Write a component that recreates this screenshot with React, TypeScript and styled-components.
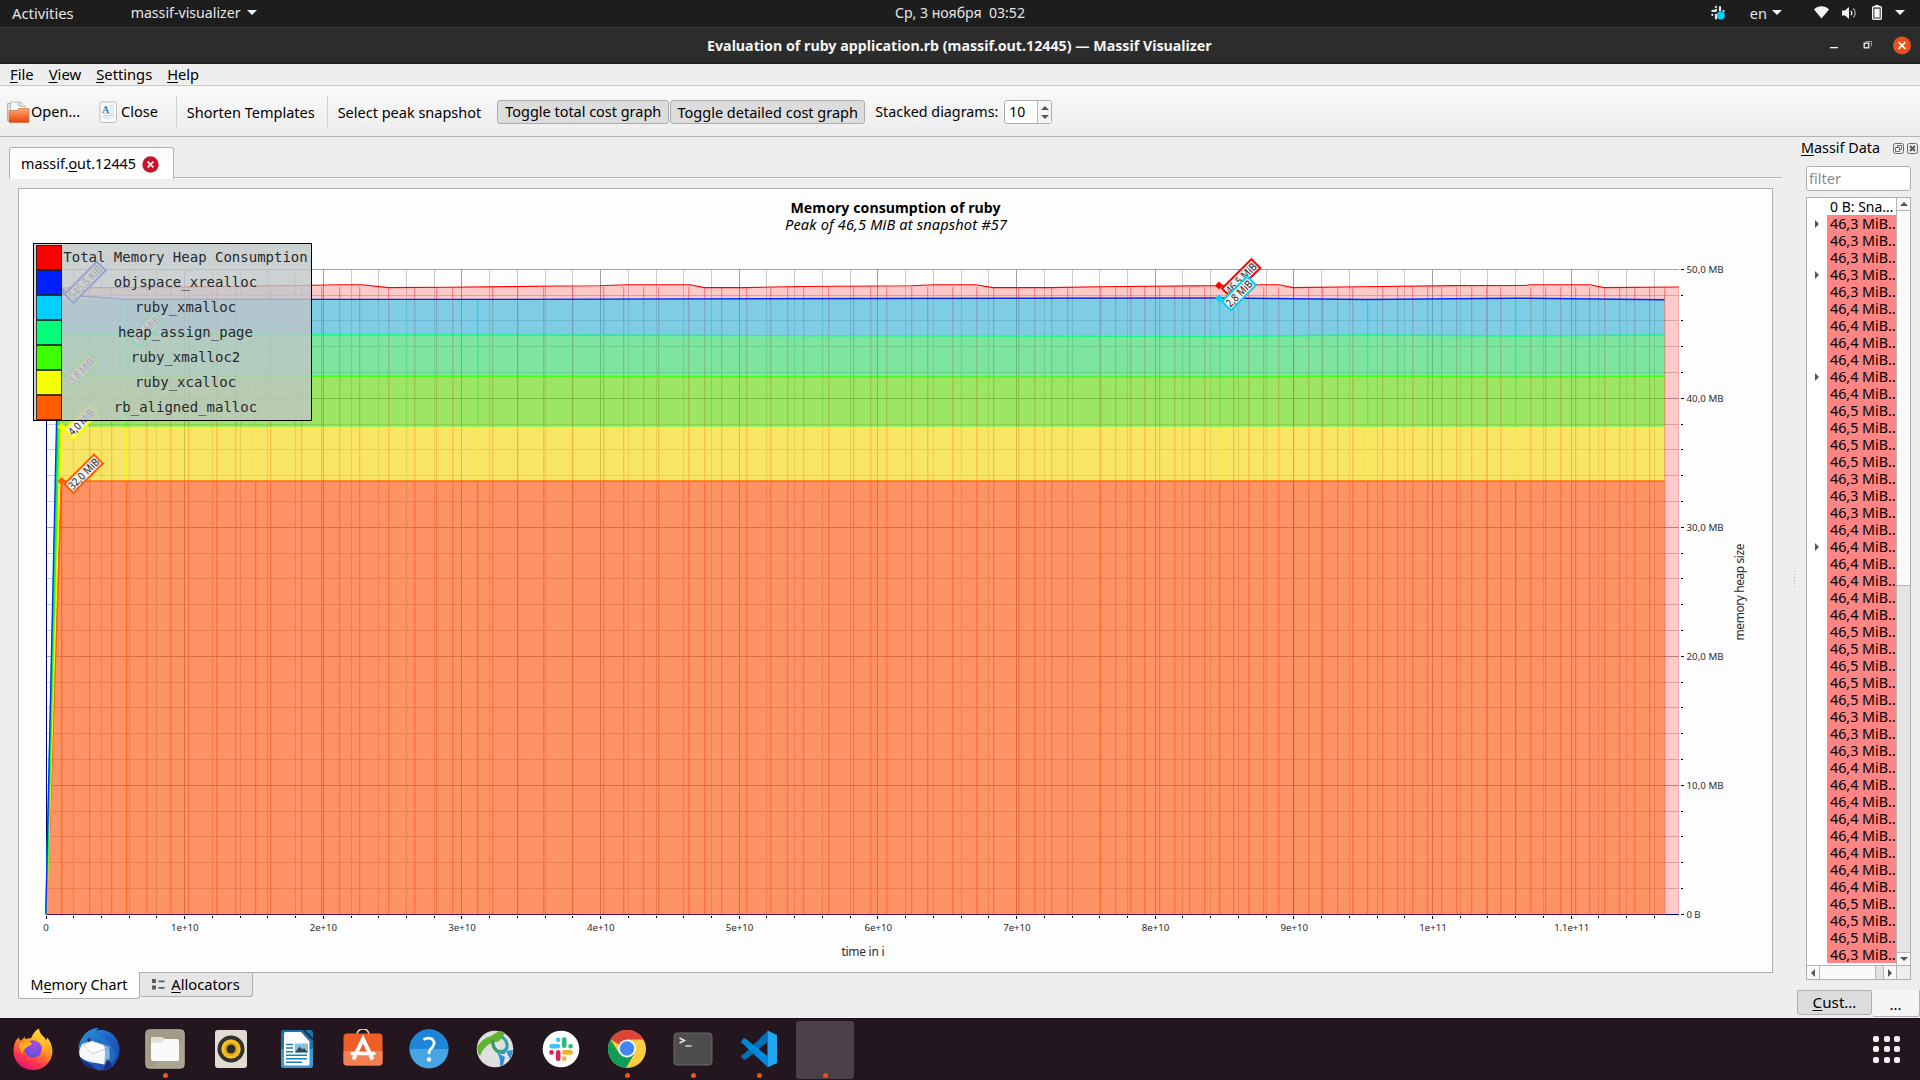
import React from "react";
import styled, { createGlobalStyle, css } from "styled-components";

const SANS = '"Noto Sans", "Open Sans", sans-serif';

const Global = createGlobalStyle`
  *, *::before, *::after { box-sizing: border-box; }
  body { margin: 0; background: #eeeeee; font-family: ${SANS}; color: #000; overflow: hidden; }
  svg { display: block; flex: none; }
`;

const Screen = styled.div`
  width: 1920px;
  height: 1080px;
  display: flex;
  flex-direction: column;
  overflow: hidden;
`;

const Txt = styled.span<{ $size?: number; $bold?: boolean; $ml?: number; $dy?: number }>`
  font-size: ${(p) => p.$size ?? 14.5}px;
  font-weight: ${(p) => (p.$bold ? 700 : 400)};
  line-height: 20px;
  margin-left: ${(p) => p.$ml ?? 0}px;
  margin-top: ${(p) => p.$dy ?? 0}px;
  white-space: pre;
`;

const Key = styled.span`
  text-decoration: underline;
  text-decoration-thickness: 1px;
  text-underline-offset: 2px;
  text-decoration-skip-ink: none;
`;

const Caret = styled.i<{ $ml?: number }>`
  width: 0;
  height: 0;
  margin-left: ${(p) => p.$ml ?? 6}px;
  border-left: 5px solid transparent;
  border-right: 5px solid transparent;
  border-top: 5.5px solid #f2f2f2;
`;

/* ---------- desktop bars ---------- */

const TopBar = styled.header`
  height: 28px;
  flex: none;
  display: grid;
  grid-template-columns: 895px auto 1fr;
  align-items: center;
  padding-bottom: 2px;
  background: #1d1d1d;
  border-bottom: 1px solid #3a3a3a;
  color: #e6e6e6;
`;

const BarGroup = styled.div<{ $end?: boolean }>`
  display: flex;
  align-items: center;
  justify-content: ${(p) => (p.$end ? "flex-end" : "flex-start")};
  padding-left: ${(p) => (p.$end ? 0 : 12)}px;
  padding-right: ${(p) => (p.$end ? 15 : 0)}px;
`;

const Indicator = styled.span<{ $ml: number }>`
  display: flex;
  margin-left: ${(p) => p.$ml}px;
`;

const TitleBar = styled.div`
  height: 36px;
  flex: none;
  display: grid;
  grid-template-columns: 707px 1fr auto;
  align-items: center;
  padding-top: 1px;
  background: #2c2c2c;
  border-bottom: 2px solid #202020;
  color: #f4f4f4;
`;

const Dock = styled.footer`
  height: 62px;
  flex: none;
  display: flex;
  align-items: center;
  background: #23161f;
  border-top: 1px solid #1a1217;
`;

const Launcher = styled.div<{ $active?: boolean; $running?: boolean }>`
  position: relative;
  width: 58px;
  height: 58px;
  margin: 0 4px;
  padding-bottom: 2px;
  flex: none;
  display: flex;
  align-items: center;
  justify-content: center;
  border-radius: 3px;
  background: ${(p) => (p.$active ? "#4b4048" : "transparent")};
  ${(p) =>
    p.$running &&
    css`
      &::after {
        content: "";
        position: absolute;
        left: 26.5px;
        bottom: 1px;
        width: 5px;
        height: 5px;
        border-radius: 50%;
        background: #e95420;
      }
    `}
`;

const AppGrid = styled.div`
  margin-left: auto;
  margin-right: 20px;
  margin-bottom: 1px;
  display: grid;
  grid-template-columns: repeat(3, 6px);
  gap: 4.5px;
`;

const GridDot = styled.i`
  width: 6px;
  height: 6px;
  border-radius: 2px;
  background: #f3f1f2;
`;

/* ---------- window chrome ---------- */

const MenuBar = styled.nav`
  height: 22px;
  flex: none;
  display: flex;
  align-items: center;
  padding-bottom: 2px;
  background: #eeeeee;
  border-bottom: 1px solid #cacaca;
`;

const ToolBar = styled.div`
  height: 51px;
  flex: none;
  display: flex;
  align-items: center;
  padding: 2px 0 0 7px;
  background: linear-gradient(#f9f9f9, #ededed);
  border-bottom: 1px solid #b3b3b3;
`;

const Separator = styled.i<{ $ml: number }>`
  width: 1px;
  height: 32px;
  margin-left: ${(p) => p.$ml}px;
  background: #d0d0d0;
`;

const ToggleButton = styled.button<{ $w: number; $ml: number }>`
  width: ${(p) => p.$w}px;
  height: 24px;
  margin-left: ${(p) => p.$ml}px;
  padding: 0;
  display: flex;
  align-items: center;
  justify-content: center;
  border: 1px solid #adadad;
  border-radius: 3px;
  background: #dcdcdc;
  color: #000;
  font-family: inherit;
`;

const Spin = styled.div`
  width: 48px;
  height: 24px;
  margin-left: 6px;
  display: flex;
  align-items: center;
  border: 1px solid #adadad;
  border-radius: 3px;
  background: #fff;
`;

const SpinButtons = styled.div`
  width: 14px;
  height: 22px;
  margin-left: auto;
  display: flex;
  flex-direction: column;
  align-items: center;
  justify-content: center;
  gap: 5px;
  border-left: 1px solid #b8b8b8;
  background: #f5f5f5;
`;

const Arrow = styled.i<{ $dir: "up" | "down" | "left" | "right" }>`
  width: 0;
  height: 0;
  border: 4px solid transparent;
  ${(p) => p.$dir === "up" && css`border-top: 0; border-bottom-color: #555;`}
  ${(p) => p.$dir === "down" && css`border-bottom: 0; border-top-color: #555;`}
  ${(p) => p.$dir === "left" && css`border-left: 0; border-right-color: #555;`}
  ${(p) => p.$dir === "right" && css`border-right: 0; border-left-color: #555;`}
`;

const Main = styled.main`
  flex: 1;
  min-height: 0;
  display: flex;
  background: #eeeeee;
`;

const Document = styled.section`
  width: 1782px;
  flex: none;
  display: flex;
  flex-direction: column;
  padding-top: 10px;
`;

const FileTabs = styled.div`
  height: 32px;
  flex: none;
  display: flex;
  &::before, &::after {
    content: "";
    height: 32px;
    border-bottom: 1px solid #fff;
    box-shadow: inset 0 -1px 0 #b3b3b3;
  }
  &::before { width: 9px; box-shadow: none; border-color: transparent; }
  &::after { flex: 1; }
`;

const FileTab = styled.div`
  width: 165px;
  height: 32px;
  display: flex;
  align-items: center;
  padding: 1px 0 0 11px;
  border: 1px solid #b3b3b3;
  border-bottom: 0;
  border-radius: 3px 3px 0 0;
  background: linear-gradient(#f9f9f9, #fff 60%);
`;

const TabClose = styled.span`
  margin-left: 6px;
`;

const ChartFrame = styled.div`
  position: relative;
  width: 1755px;
  height: 785px;
  flex: none;
  margin: 9px 0 0 18px;
  border: 1px solid #aeaeae;
  background: #fdfdfd;
`;

const Legend = styled.ul`
  position: absolute;
  left: 14px;
  top: 54px;
  width: 279px;
  height: 178px;
  margin: 0;
  padding: 1px 1px 1px 2px;
  list-style: none;
  border: 1px solid #000;
  background: rgba(191, 197, 199, 0.8);
`;

const LegendRow = styled.li`
  height: 25px;
  display: flex;
  align-items: center;
  font-family: "DejaVu Sans Mono", monospace;
  font-size: 14px;
  color: #26292c;
`;

const Swatch = styled.i<{ $color: string }>`
  width: 26px;
  height: 25px;
  flex: none;
  border: 1.5px solid rgba(35, 30, 30, 0.85);
  background: ${(p) => p.$color};
`;

const LegendName = styled.span`
  flex: 1;
  text-align: center;
  padding: 0 1px 1px 0;
  white-space: nowrap;
`;

const ViewTabs = styled.div`
  display: flex;
  align-items: flex-start;
  padding-left: 18px;
`;

const ViewTab = styled.div<{ $w: number; $current?: boolean }>`
  width: ${(p) => p.$w}px;
  height: ${(p) => (p.$current ? 27 : 24)}px;
  margin-top: ${(p) => (p.$current ? -1 : 0)}px;
  display: flex;
  align-items: center;
  justify-content: center;
  gap: 6px;
  position: relative;
  padding-bottom: ${(p) => (p.$current ? 0 : 1)}px;
  border: 1px solid #aeaeae;
  border-top: 0;
  border-left-width: ${(p) => (p.$current ? 1 : 0)}px;
  border-radius: 0 0 3px 3px;
  background: ${(p) => (p.$current ? "#fdfdfd" : "#e6e6e6")};
`;

/* ---------- data panel ---------- */

const Splitter = styled.div`
  width: 15px;
  flex: none;
  display: flex;
  flex-direction: column;
  justify-content: center;
  padding-left: 12px;
`;

const SplitGrip = styled.i`
  height: 17px;
  width: 1px;
  margin-top: 3px;
  background: repeating-linear-gradient(#a8a8a8 0 1px, transparent 1px 3px);
`;

const DataPanel = styled.aside`
  width: 123px;
  flex: none;
  display: flex;
  flex-direction: column;
`;

const PanelTitle = styled.div`
  height: 22px;
  display: flex;
  align-items: center;
  padding-left: 4px;
  svg { margin-left: 3px; }
`;

const Filter = styled.input`
  width: 105px;
  height: 25px;
  margin: 7px 0 0 9px;
  padding: 0 2px 2px;
  border: 1px solid #b0b0b0;
  border-radius: 3px;
  background: #fff;
  font-family: inherit;
  font-size: 14.5px;
  &::placeholder { color: #8a8a8a; opacity: 1; }
`;

const Tree = styled.div`
  width: 105px;
  height: 783px;
  margin: 6px 0 0 9px;
  display: grid;
  grid-template-columns: 1fr 14px;
  grid-template-rows: 1fr 14px;
  border: 1px solid #b0b0b0;
  background: #fff;
`;

const TreeRows = styled.div`
  overflow: hidden;
  min-height: 0;
`;

const TreeRow = styled.div`
  height: 17px;
  display: grid;
  grid-template-columns: 20px 1fr;
  align-items: center;
`;

const Expander = styled.span`
  display: flex;
  justify-content: center;
`;

const Cell = styled.span<{ $peak?: boolean }>`
  height: 17px;
  padding-left: 3px;
  white-space: nowrap;
  font-size: ${(p) => (p.$peak ? 14.3 : 14)}px;
  line-height: 17px;
  background: ${(p) => (p.$peak ? "#ff8585" : "#fff")};
`;

const VScroll = styled.div`
  display: flex;
  flex-direction: column;
  border-left: 1px solid #b4b4b4;
  background: #e4e4e4;
`;

const HScroll = styled.div`
  display: flex;
  border-top: 1px solid #b4b4b4;
  background: #e4e4e4;
`;

const ScrollButton = styled.span<{ $edge: "top" | "bottom" | "left" | "right" }>`
  width: 13px;
  height: 13px;
  flex: none;
  display: flex;
  align-items: center;
  justify-content: center;
  background: #f8f8f8;
  border-${(p) => p.$edge}: 1px solid #b4b4b4;
`;

const Thumb = styled.i<{ $len: number; $horizontal?: boolean }>`
  flex: none;
  background: #fafafa;
  ${(p) =>
    p.$horizontal
      ? css`width: ${p.$len}px; border-right: 1px solid #b4b4b4;`
      : css`height: ${p.$len}px; border-bottom: 1px solid #b4b4b4;`}
`;

const Gap = styled.i`
  flex: 1;
`;

const Corner = styled.i`
  border-top: 1px solid #b4b4b4;
  border-left: 1px solid #b4b4b4;
  background: #eeeeee;
`;

const PanelTabs = styled.div`
  display: flex;
  align-items: flex-start;
  margin-top: 10px;
`;

const PanelTab = styled.div<{ $w: number; $current?: boolean }>`
  width: ${(p) => p.$w}px;
  height: ${(p) => (p.$current ? 27 : 25)}px;
  display: flex;
  align-items: center;
  justify-content: center;
  padding-bottom: 1px;
  border: 1px solid #b0b0b0;
  border-top-color: ${(p) => (p.$current ? "#f5f5f5" : "#b0b0b0")};
  border-left-width: ${(p) => (p.$current ? 0 : 1)}px;
  border-radius: 0 0 3px 3px;
  background: ${(p) => (p.$current ? "#f5f5f5" : "#dcdcdc")};
`;

/* ---------- chart ---------- */

const X0 = 46;
const Y0 = 914;
const XD = 1664.5;
const XR = 1679;

const DETAILED = [61, 126, 255, 477, 1219, 1367, 1515];
const SNAPSHOTS = [
  89, 111, 146, 170, 188, 216, 235, 270, 301, 321, 339, 359, 388, 414, 436, 452, 492, 517, 543, 572, 603, 623, 643, 658,
  688, 704, 721, 746, 770, 787, 803, 828, 853, 870, 886, 911, 927, 952, 976, 993, 1018, 1034, 1051, 1067, 1100, 1115,
  1130, 1144, 1159, 1174, 1189, 1204, 1233, 1248, 1263, 1278, 1293, 1308, 1322, 1337, 1352, 1382, 1397, 1412, 1427,
  1441, 1456, 1471, 1486, 1500, 1530, 1545, 1560, 1575, 1589, 1604, 1619, 1634, 1649, 1664,
];

const TOTAL =
  "46,914 61.6,288 180,287 300,285.5 340,284.7 362,284.7 388,287.6 450,287.3 560,286 600,285.8 625,284.7 690,284.7 704,287.6 745,287.6 800,286.5 911,285.8 935,284.7 976,284.7 993,287.6 1050,287.6 1100,286.8 1219,285.6 1235,284.7 1279,284.7 1293,287.6 1360,286.8 1456,285.6 1525,285.5 1530,284.7 1590,284.7 1604,287.6 1679,287";

type Point = [number, number];
const LEVELS: { color: string; top: Point[] }[] = [
  { color: "#00cfff", top: [[61, 299.5], [1664.5, 299.5]] },
  { color: "#00ff78", top: [[61, 334.5], [477, 335], [700, 335.5], [1219, 336.5], [1367, 335], [1515, 336], [1664.5, 335]] },
  { color: "#3cff00", top: [[61, 376.2], [477, 376.5], [1219, 377], [1367, 376.3], [1515, 377], [1664.5, 376.4]] },
  { color: "#f4ff00", top: [[61, 427.6], [1664.5, 427.6]] },
  { color: "#ff5c00", top: [[61, 481], [1664.5, 481]] },
];
const BLUE: Point[] = [[60.5, 294.5], [126, 299.4], [477, 299.4], [880, 298.5], [1219, 298], [1367, 299.5], [1515, 298.2], [1664.5, 299.8]];

const toPath = (pts: Point[]) => pts.map((p) => p.join(",")).join(" ");

const band = (i: number) => {
  const upper = LEVELS[i].top;
  const lower = i + 1 < LEVELS.length ? LEVELS[i + 1].top : ([[61, Y0], [XD, Y0]] as Point[]);
  return toPath([[X0, Y0], ...upper, ...[...lower].reverse()]);
};

function Grid() {
  const minor: React.ReactNode[] = [];
  const major: React.ReactNode[] = [];
  for (let k = 0; k <= 58; k++) {
    const x = Math.floor(X0 + 27.73 * k);
    if (k % 5 === 0) major.push(<rect key={"x" + k} x={x} y={269} width={1} height={645} />);
    else minor.push(<rect key={"x" + k} x={x} y={269} width={1} height={645} />);
  }
  for (let j = 1; j <= 25; j++) {
    const y = Math.floor(Y0 + 0.3 - 25.8 * j);
    if (j % 5 === 0) major.push(<rect key={"y" + j} x={X0} y={y} width={XR - X0} height={1} />);
    else minor.push(<rect key={"y" + j} x={X0} y={y} width={XR - X0} height={1} />);
  }
  return (
    <g>
      <g fill="#cbcbcb">{minor}</g>
      <g fill="#a0a0a0">{major}</g>
    </g>
  );
}

const Y_LABELS = ["0 B", "10,0 MB", "20,0 MB", "30,0 MB", "40,0 MB", "50,0 MB"];
const X_LABELS = ["0", "1e+10", "2e+10", "3e+10", "4e+10", "5e+10", "6e+10", "7e+10", "8e+10", "9e+10", "1e+11", "1.1e+11"];

function Axes() {
  return (
    <g fontFamily={SANS} fontSize={9.7} fill="#2c2c30">
      <rect x={X0} y={269} width={1} height={646} fill="#000080" />
      <rect x={X0} y={Y0} width={XD - X0} height={1} fill="#5a0f50" />
      <rect x={XD} y={Y0} width={XR - XD} height={1} fill="#000080" />
      {Array.from({ length: 59 }, (_, k) => (
        <rect key={"tx" + k} x={Math.floor(X0 + 27.73 * k)} y={916} width={1} height={k % 5 ? 2 : 3} fill="#000" />
      ))}
      {Array.from({ length: 26 }, (_, j) => (
        <rect key={"ty" + j} x={1681} y={Math.floor(Y0 + 0.3 - 25.8 * j)} width={j % 5 ? 2 : 3} height={1} fill="#000" />
      ))}
      {Y_LABELS.map((t, i) => (
        <text key={t} x={1686.5} y={918 - 129 * i} textLength={i ? 37 : 14}>{t}</text>
      ))}
      {X_LABELS.map((t, i) => (
        <text key={t} x={46 + 138.7 * i} y={931} textAnchor="middle" textLength={t.length > 5 ? 35 : t.length > 1 ? 27.5 : 5.5}>
          {t}
        </text>
      ))}
      <text x={863} y={956} fontSize={12} textAnchor="middle" textLength={43}>time in i</text>
      <text transform="translate(1744 592) rotate(-90)" fontSize={12} textAnchor="middle" textLength={97}>memory heap size</text>
    </g>
  );
}

interface MarkProps {
  x: number;
  y: number;
  w: number;
  color: string;
  label: string;
}

function Mark({ x, y, w, color, label }: MarkProps) {
  return (
    <g>
      <path d={`M${x - 4} ${y}l4-4 4 4-4 4z`} fill={color} />
      <g transform={`translate(${x + 3} ${y + 3}) rotate(-45)`}>
        <rect width={w - 2} height={12.5} fill="#f3f0ef" stroke={color} strokeWidth={2} />
        <text x={(w - 2) / 2} y={10.2} fontFamily={SANS} fontSize={10.8} fill="#222" textAnchor="middle" textLength={w - 5} lengthAdjust="spacingAndGlyphs">
          {label}
        </text>
      </g>
    </g>
  );
}

function Chart() {
  return (
    <svg width={1753} height={783} viewBox="19 189 1753 783">
      <g fontFamily={SANS} textAnchor="middle" fill="#000">
        <text x={895.5} y={213} fontSize={14.1} fontWeight={700} textLength={210}>Memory consumption of ruby</text>
        <text x={896} y={230} fontSize={14.6} fontStyle="italic" textLength={222}>Peak of 46,5 MiB at snapshot #57</text>
      </g>
      <Grid />
      <polygon points={`${TOTAL} ${XR},${Y0}`} fill="#ff0000" fillOpacity={0.2} />
      <g fill="#ff0000" fillOpacity={0.34}>
        {SNAPSHOTS.map((x) => <rect key={x} x={x} y={287} width={1.3} height={627} />)}
        <rect x={1678} y={287} width={1} height={627} fillOpacity={0.15} />
      </g>
      <polyline points={TOTAL} fill="none" stroke="#ff0000" strokeWidth={1.1} />
      {LEVELS.map((l, i) => <polygon key={l.color} points={band(i)} fill={l.color} fillOpacity={0.5} />)}
      {LEVELS.map((l, i) => {
        const y = l.top[0][1];
        const end = i + 1 < LEVELS.length ? LEVELS[i + 1].top[0][1] : Y0;
        return (
          <g key={l.color} fill={l.color} fillOpacity={0.7}>
            {DETAILED.map((x) => <rect key={x} x={x} y={y} width={1.3} height={end - y} />)}
          </g>
        );
      })}
      {LEVELS.slice(1).map((l) => (
        <polyline key={l.color} points={toPath(l.top)} fill="none" stroke={l.color} strokeOpacity={0.85} strokeWidth={1.4} />
      ))}
      <polyline points="61,481.4 1664.5,481.4" fill="none" stroke="#f08000" strokeWidth={1} />
      <polyline points={toPath(BLUE)} fill="none" stroke="#0028ff" strokeWidth={1.4} />
      <Axes />
      <g fill="none" strokeWidth={1.8}>
        <path d="M46.5 914 61.5 481" stroke="#ff5c00" />
        <path d="M46.5 914 61 427" stroke="#f4ff00" />
        <path d="M46.3 914 60.2 376" stroke="#3cff00" />
        <path d="M46 914 59.3 335" stroke="#00d890" />
        <path d="M45.8 914 59.2 299" stroke="#0030ff" strokeWidth={1.3} />
      </g>
      <Mark x={61.7} y={291} w={47.6} color="#0020e0" label="545,5 KiB" />
      <Mark x={127} y={334} w={36.5} color="#00ff78" label="3,1 MiB" />
      <Mark x={61.5} y={375.5} w={36.5} color="#3cff00" label="3,8 MiB" />
      <Mark x={61.5} y={426.8} w={36.5} color="#f4ff00" label="4,0 MiB" />
      <Mark x={61.5} y={481} w={43.6} color="#ff5c00" label="32,0 MiB" />
      <Mark x={1219} y={285.6} w={43.6} color="#ff0000" label="46,5 MiB" />
      <Mark x={1219} y={298.6} w={37.5} color="#00cfff" label="2,8 MiB" />
    </svg>
  );
}

const LEGEND: [string, string][] = [
  ["#ff0000", "Total Memory Heap Consumption"],
  ["#0020ff", "objspace_xrealloc"],
  ["#00cfff", "ruby_xmalloc"],
  ["#00ff78", "heap_assign_page"],
  ["#3cff00", "ruby_xmalloc2"],
  ["#f4ff00", "ruby_xcalloc"],
  ["#ff5c00", "rb_aligned_malloc"],
];

const SIZES = "33333" + "444444" + "5555" + "333" + "444444" + "55555" + "333" + "44444444" + "555" + "3";
const EXPANDABLE = [0, 3, 9, 19];

/* ---------- icons ---------- */

const SlackTray = () => (
  <svg width="16" height="16" viewBox="0 0 16 16">
    <g stroke="#e8e8e8" strokeWidth="2.2" strokeLinecap="round">
      <path d="M6 4.8v1M6 1.900v.1M10 2.200v3.200M2.400 5.900h3M13.600 6h-.1M2.300 9.800h.1M6 9.800v3.600" />
    </g>
    <circle cx="10.800" cy="10.500" r="4" fill="#00d0f5" />
  </svg>
);

const Wifi = () => (
  <svg width="15" height="13" viewBox="0 0 15 13">
    <path d="M7.5 12.5 0 3.6C4-.8 11-.8 15 3.6z" fill="#f2f2f2" />
  </svg>
);

const Volume = () => (
  <svg width="15" height="14" viewBox="0 0 15 14">
    <path d="M0 4.5h3L7 1v12L3 9.5H0z" fill="#f2f2f2" />
    <path d="M9 4.8q1.6 2.2 0 4.4" fill="none" stroke="#f2f2f2" strokeWidth="1.3" />
    <path d="M11.4 2.4q3.6 4.6 0 9.2" fill="none" stroke="#b0b0b0" strokeWidth="1.2" />
  </svg>
);

const Battery = () => (
  <svg width="10" height="15" viewBox="0 0 10 15">
    <path d="M3 0h4v2H3z" fill="#f2f2f2" />
    <rect x=".7" y="1.7" width="8.6" height="12.6" rx="1" fill="none" stroke="#f2f2f2" strokeWidth="1.4" />
    <path d="M2.3 3.6h5.4v9H2.3z" fill="#f2f2f2" />
  </svg>
);

const WindowButtons = () => (
  <svg width="98" height="34" viewBox="0 0 98 34">
    <path d="M8 18h8v1.300H8z" fill="#f2f2f2" />
    <path d="M43.500 12.500h6v5" fill="none" stroke="#999" />
    <rect x="42.200" y="14.200" width="4.600" height="4.600" fill="none" stroke="#f2f2f2" strokeWidth="1.300" />
    <circle cx="80" cy="16.500" r="9" fill="#e8501c" />
    <path d="m76.600 13.100 6.800 6.800m0-6.800-6.800 6.800" stroke="#fff" strokeWidth="1.500" />
  </svg>
);

const OpenIcon = () => (
  <svg width="23" height="22" viewBox="0 0 23 22">
    <defs>
      <linearGradient id="fold" x2="0" y2="1">
        <stop offset="0" stopColor="#f6b07c" />
        <stop offset=".5" stopColor="#f0763a" />
        <stop offset="1" stopColor="#e8430f" />
      </linearGradient>
    </defs>
    <path d="M.5 20V2.5h4V20z" fill="#e2e0dd" stroke="#b5b2ae" />
    <path d="M3.5 1h10l4.5 4.5V14H3.5z" fill="#f8f8f7" stroke="#b9b9b9" />
    <path d="M11 1v3.5h3M13.5 1v4.5H18" fill="none" stroke="#b9b9b9" />
    <path d="M2 20.5V9.5h8l1.5-2H22v13q0 1-1 1H3q-1 0-1-1z" fill="url(#fold)" stroke="#d9622c" strokeWidth=".6" />
  </svg>
);

const DocIcon = () => (
  <svg width="19" height="23" viewBox="0 0 19 23">
    <rect x="1" y="1" width="16.5" height="20.5" rx="2" fill="#fafafa" stroke="#bdbdbd" />
    <text x="3" y="11.5" fontFamily="Liberation Serif, serif" fontWeight="700" fontSize="10" fill="#3a76b0">A</text>
    <path d="M11 4.5h4M11 7h4M11 9.5h4M4 12.5h11M4 14.7h11M4 17h8" stroke="#b5d8f2" strokeWidth="1.2" />
  </svg>
);

const RedClose = () => (
  <svg width="17" height="17" viewBox="0 0 17 17">
    <circle cx="8.5" cy="8.5" r="8.2" fill="#c8152c" />
    <path d="m5.7 5.7 5.6 5.6m0-5.6-5.6 5.6" stroke="#fff" strokeWidth="1.8" />
  </svg>
);

const ListIcon = () => (
  <svg width="13" height="11" viewBox="0 0 13 11">
    <path d="M0 0h4v4H0zM0 6.500h4v4H0zM6.500 1.500h6v1.700h-6zM6.500 8h6v1.700h-6z" fill="#555c63" />
  </svg>
);

const FloatIcon = () => (
  <svg width="11" height="11" viewBox="0 0 11 11" fill="none" stroke="#6b6b6b">
    <rect x=".5" y=".5" width="10" height="10" rx="2" />
    <path d="M4.500 4.500v-2h4v4h-2M2.500 4.500h4v4h-4z" />
  </svg>
);

const CloseIcon = () => (
  <svg width="11" height="11" viewBox="0 0 11 11" fill="none" stroke="#6b6b6b">
    <rect x=".5" y=".5" width="10" height="10" rx="2" />
    <path d="m3 3 5 5m0-5-5 5" strokeWidth="2" stroke="#5a5a5a" />
  </svg>
);

const Firefox = () => (
  <svg width="42" height="42" viewBox="0 0 42 42">
    <defs>
      <linearGradient id="ff" x1=".8" y1="0" x2=".3" y2="1">
        <stop offset="0" stopColor="#fff04a" />
        <stop offset=".4" stopColor="#ffa01e" />
        <stop offset=".75" stopColor="#ff3a4a" />
        <stop offset="1" stopColor="#e60f78" />
      </linearGradient>
      <radialGradient id="fc" cx=".6" cy=".2" r=".9">
        <stop offset="0" stopColor="#a84ae8" />
        <stop offset="1" stopColor="#5c50d8" />
      </radialGradient>
    </defs>
    <path d="M6.500 9.500 8.500 13q1-1.500 2.500-2l1.500-2.500.6 2.500 6-1C21 6 23 2.500 27 .500q.5 5 5 8.500 1.500 1.500 2.200 3.500l1-3q5 5.500 5.300 14A19.500 18.800 0 1 1 1.800 20q0-6 4.700-10.500z" fill="url(#ff)" />
    <circle cx="21" cy="21" r="8.700" fill="url(#fc)" />
    <path d="M7 16q5-1 8-3 3 0 5 2.500-.5 2-3.500 2.500l-2.500 2q-4 2-3 6-4-4-4-10z" fill="#ffae22" />
    <path d="M18 11.500q7-2 12 4 3 5 0 11 5-8 1-15-3-4-5-8-4 4-3 7-3-.5-5 1z" fill="#ffc92e" opacity=".8" />
  </svg>
);

const Thunderbird = () => (
  <svg width="44" height="44" viewBox="0 0 44 44">
    <defs>
      <linearGradient id="tb" x2="1" y2="1">
        <stop offset="0" stopColor="#2f9bd8" />
        <stop offset=".5" stopColor="#1f62c4" />
        <stop offset="1" stopColor="#19409c" />
      </linearGradient>
    </defs>
    <path d="M10 5Q16 .5 22 1l-3 2.500q10-2 17 4 7 7 6.500 17-1 9-7 15l-6 3.500-8 .5L8 37q-7-7-6.500-17Q3 11 10 5z" fill="url(#tb)" />
    <path d="M5 17q-4 7-2 13 6 5 16 6l11 2q4-6 2-18L14 14z" fill="#f6f7f9" />
    <path d="m6.500 18 9 9 17-7-18-6z" fill="#fff" stroke="#c2c9d4" strokeWidth=".9" />
    <path d="M13 3Q5 9 5 18q2-7 10-8 8 0 11 6 4 8 0 26 12-5 13-15Q32 12 13 3z" fill="#2a7fd0" opacity=".55" />
    <path d="M2 29q3 10 12 13l3-3-10-5zM30 32l-4 11q7-2 9-6z" fill="#1b2d7c" />
    <circle cx="12" cy="13" r="1.800" fill="#15306e" />
  </svg>
);

const Files = () => (
  <svg width="40" height="40" viewBox="0 0 40 40">
    <rect x=".8" y=".8" width="38.400" height="38.400" rx="3.500" fill="#a39b87" stroke="#b9b2a0" />
    <path d="m6 39 33-28v26q0 2-2 2z" fill="#aca591" />
    <path d="M6 30V10q0-2 2-2h9l2.500 2H32q2 0 2 2v18q0 2-2 2H8q-2 0-2-2z" fill="#fafafa" />
    <path d="M6 14v-4q0-2 2-2h9l2.500 2-2 3z" fill="#e3dfd7" />
  </svg>
);

const Rhythmbox = () => (
  <svg width="34" height="40" viewBox="0 0 34 40">
    <rect x="1" y="1" width="32" height="38" rx="3" fill="#e2ddd3" />
    <circle cx="17" cy="20" r="13.500" fill="#303030" />
    <circle cx="17" cy="20" r="9.800" fill="#e2a80e" />
    <circle cx="17" cy="20" r="8" fill="none" stroke="#f7c72e" strokeWidth="2" />
    <circle cx="17" cy="20" r="4.500" fill="#2b2b2b" />
  </svg>
);

const Writer = () => (
  <svg width="34" height="40" viewBox="0 0 34 40">
    <rect x="1" y="1" width="32" height="38" rx="3" fill="#1577ad" />
    <path d="M1 20h32v16q0 3-3 3H4q-3 0-3-3z" fill="#3d9ad0" />
    <path d="M4 4.500Q4 3 5.500 3H21l8.500 9.500V35q0 1.500-1.500 1.500H5.500Q4 36.500 4 35z" fill="#fff" />
    <path d="M22 1h3l8 8v3z" fill="#22161f" opacity=".7" />
    <path d="M6 15.500h7M6 19h7M6 22.700h7M6 26.300h21M6 29.800h21M6 33.300h16" stroke="#1a7fb8" strokeWidth="1.500" />
    <path d="M15 14.500h13v9H15z" fill="#7cc4ee" />
    <path d="m15 23.500 4.500-6 3 3 1.500-1.500 4 4.500z" fill="#3a4750" />
    <circle cx="25.500" cy="16.500" r="1.300" fill="#f0b820" />
  </svg>
);

const Software = () => (
  <svg width="40" height="40" viewBox="0 0 40 40">
    <path d="M14 8V5.500a6 5.500 0 0 1 12 0V8" fill="none" stroke="#f0cfae" strokeWidth="1.600" />
    <rect x=".5" y="4.500" width="39" height="32" rx="3.500" fill="#f05e28" />
    <path d="M.500 22h39v11q0 3.500-3.500 3.500H4Q.5 36.500.5 33z" fill="#f48052" />
    <path d="M13.500 23.500 20 10 26.500 23.500" fill="none" stroke="#fff" strokeWidth="4" />
    <path d="M9 24.500h22" stroke="#fff" strokeWidth="3.400" strokeLinecap="round" />
    <path d="m12.500 26-2 4.500M27.500 26l2 4.500" stroke="#fff" strokeWidth="4" />
  </svg>
);

const Help = () => (
  <svg width="40" height="40" viewBox="0 0 40 40">
    <circle cx="20" cy="20" r="19.500" fill="#48a5e4" />
    <path d="M.500 20a19.500 19.500 0 0 1 39 0z" fill="#1e86d8" />
    <path d="M14.500 10.500q5-2.500 8.500-.5 4 3.500.5 8-3.500 3-3.500 7" fill="none" stroke="#fff" strokeWidth="2.600" />
    <circle cx="20" cy="30.500" r="2.200" fill="#fff" />
  </svg>
);

const Cookie = () => (
  <svg width="38" height="38" viewBox="0 0 38 38">
    <circle cx="19" cy="19" r="18.300" fill="#dedfde" />
    <path d="M1.500 16.500Q6 8.500 15 6l8-5q4 0 5.500 1.500-1 5-6 9-7 .5-12 4.500-4.500 4-6.500 10-3.500-4-2.500-9.500z" fill="#62b32e" />
    <path d="M17 10q-1 6 3 10 4 3.500 9 2" fill="none" stroke="#3a9a5a" strokeWidth="3.200" />
    <path d="M26 7q6 4 5 10.500-2 5.500-8 3.500" fill="none" stroke="#2f9fae" strokeWidth="3.200" />
    <path d="M20 22q5 4 4 14l3-1 2-8zM30 21l7-1q-1 6-3 9z" fill="#2a8fd6" />
  </svg>
);

const Slack = () => (
  <svg width="38" height="38" viewBox="0 0 38 38">
    <circle cx="19" cy="19" r="18.300" fill="#fff" />
    <g strokeWidth="4.600" strokeLinecap="round">
      <path d="M9.500 16.200h6.300M16.200 9.700v.1" stroke="#36c5f0" />
      <path d="M22.300 9.500v6.300M28.500 16.200h.1" stroke="#2eb67d" />
      <path d="M22.300 22.400h6.300M22.300 28.600v.1" stroke="#ecb22e" />
      <path d="M16.200 22.400v6.300M9.500 22.400h.1" stroke="#e01e5a" />
    </g>
  </svg>
);

const Chrome = () => (
  <svg width="40" height="40" viewBox="0 0 40 40">
    <circle cx="20" cy="20" r="19" fill="#ffcd40" />
    <path d="M20 20 3.500 10.500A19 19 0 0 1 36.500 10.500H20z" fill="#db4437" />
    <path d="M3.500 10.500A19 19 0 0 0 19 39l8.500-14.500-7.500 4-8-4.500z" fill="#0f9d58" />
    <circle cx="20" cy="19.500" r="9" fill="#f4f4f4" />
    <circle cx="20" cy="19.500" r="7.200" fill="#4285f4" />
  </svg>
);

const Terminal = () => (
  <svg width="40" height="34" viewBox="0 0 40 34">
    <rect x="1" y="1" width="38" height="32" rx="3" fill="#4d4d4d" stroke="#6a6a6a" />
    <path d="m6.500 6 5 2.500-5 2.500" fill="none" stroke="#e6e6e6" strokeWidth="1.500" />
    <path d="M12.500 14h6" stroke="#e6e6e6" strokeWidth="1.400" />
  </svg>
);

const VsCode = () => (
  <svg width="38" height="38" viewBox="0 0 38 38">
    <path d="M27.500 1 5 23 1.500 25.500l-.5 1 2.500 3q1 .5 2 0L27.500 12z" fill="#0070b8" />
    <path d="M27.500 37 1.500 12.500l-.5-1 2.500-3q1-.5 2 0L27.500 26z" fill="#0088d8" />
    <path d="M27.500.500 37 5v28l-9.500 4.500z" fill="#25a6f2" />
  </svg>
);

const LAUNCHERS: { icon?: React.ReactNode; running?: boolean; active?: boolean }[] = [
  { icon: <Firefox /> },
  { icon: <Thunderbird /> },
  { icon: <Files />, running: true },
  { icon: <Rhythmbox /> },
  { icon: <Writer /> },
  { icon: <Software /> },
  { icon: <Help /> },
  { icon: <Cookie /> },
  { icon: <Slack /> },
  { icon: <Chrome />, running: true },
  { icon: <Terminal />, running: true },
  { icon: <VsCode />, running: true },
  { running: true, active: true },
];

export default function App() {
  return (
    <Screen>
      <Global />
      <TopBar>
        <BarGroup>
          <Txt $size={14.8}>Activities</Txt>
          <Txt $size={14.17} $ml={57}>massif-visualizer</Txt>
          <Caret />
        </BarGroup>
        <Txt $size={14.08}>Ср, 3 ноября  03:52</Txt>
        <BarGroup $end>
          <SlackTray />
          <Txt $size={14.5} $ml={24}>en</Txt>
          <Caret $ml={5} />
          <Indicator $ml={32}><Wifi /></Indicator>
          <Indicator $ml={13}><Volume /></Indicator>
          <Indicator $ml={15}><Battery /></Indicator>
          <Caret $ml={13} />
        </BarGroup>
      </TopBar>
      <TitleBar>
        <i />
        <Txt $bold $size={14.24}>Evaluation of ruby application.rb (massif.out.12445) — Massif Visualizer</Txt>
        <WindowButtons />
      </TitleBar>

      <MenuBar>
        <Txt $ml={10} $size={14.8}><Key>F</Key>ile</Txt>
        <Txt $ml={15} $size={14.9}><Key>V</Key>iew</Txt>
        <Txt $ml={15} $size={14.7}><Key>S</Key>ettings</Txt>
        <Txt $ml={15} $size={14.6}><Key>H</Key>elp</Txt>
      </MenuBar>
      <ToolBar>
        <OpenIcon />
        <Txt $ml={1} $dy={-2}>Open...</Txt>
        <Indicator $ml={19}><DocIcon /></Indicator>
        <Txt $ml={3} $dy={-2}>Close</Txt>
        <Separator $ml={18} />
        <Txt $ml={10}>Shorten Templates</Txt>
        <Separator $ml={12} />
        <Txt $ml={10}>Select peak snapshot</Txt>
        <ToggleButton $w={172} $ml={16}><Txt $size={14.45}>Toggle total cost graph</Txt></ToggleButton>
        <ToggleButton $w={195} $ml={1}><Txt>Toggle detailed cost graph</Txt></ToggleButton>
        <Txt $ml={10} $size={14.3}>Stacked diagrams:</Txt>
        <Spin>
          <Txt $ml={4} $size={14}>10</Txt>
          <SpinButtons><Arrow $dir="up" /><Arrow $dir="down" /></SpinButtons>
        </Spin>
      </ToolBar>

      <Main>
        <Document>
          <FileTabs>
            <FileTab>
              <Txt $size={14.35}>massif.<Key>o</Key>ut.12445</Txt>
              <TabClose><RedClose /></TabClose>
            </FileTab>
          </FileTabs>
          <ChartFrame>
            <Chart />
            <Legend>
              {LEGEND.map(([color, name]) => (
                <LegendRow key={name}>
                  <Swatch $color={color} />
                  <LegendName>{name}</LegendName>
                </LegendRow>
              ))}
            </Legend>
          </ChartFrame>
          <ViewTabs>
            <ViewTab $w={122} $current><Txt $size={14.3}>M<Key>e</Key>mory Chart</Txt></ViewTab>
            <ViewTab $w={113}><ListIcon /><Txt $size={14.7}><Key>A</Key>llocators</Txt></ViewTab>
          </ViewTabs>
        </Document>
        <Splitter><SplitGrip /></Splitter>
        <DataPanel>
          <PanelTitle>
            <Txt $size={14.36}><Key>M</Key>assif Data</Txt>
            <Indicator $ml={10}><FloatIcon /></Indicator>
            <CloseIcon />
          </PanelTitle>
          <Filter placeholder="filter" />
          <Tree>
            <TreeRows>
              <TreeRow><i /><Cell>0 B: Sna…</Cell></TreeRow>
              {SIZES.split("").map((d, i) => (
                <TreeRow key={i}>
                  <Expander>{EXPANDABLE.includes(i) && <Arrow $dir="right" />}</Expander>
                  <Cell $peak>{`46,${d} MiB..`}</Cell>
                </TreeRow>
              ))}
            </TreeRows>
            <VScroll>
              <ScrollButton $edge="bottom"><Arrow $dir="up" /></ScrollButton>
              <Thumb $len={375} />
              <Gap />
              <ScrollButton $edge="top"><Arrow $dir="down" /></ScrollButton>
            </VScroll>
            <HScroll>
              <ScrollButton $edge="right"><Arrow $dir="left" /></ScrollButton>
              <Thumb $len={56} $horizontal />
              <Gap />
              <ScrollButton $edge="left"><Arrow $dir="right" /></ScrollButton>
            </HScroll>
            <Corner />
          </Tree>
          <PanelTabs>
            <PanelTab $w={75}><Txt $size={15.2}><Key>C</Key>ust…</Txt></PanelTab>
            <PanelTab $w={48} $current><Txt $size={15.2} $dy={2}>…</Txt></PanelTab>
          </PanelTabs>
        </DataPanel>
      </Main>

      <Dock>
        {LAUNCHERS.map((l, i) => (
          <Launcher key={i} $running={l.running} $active={l.active}>{l.icon}</Launcher>
        ))}
        <AppGrid>{Array.from({ length: 9 }, (_, i) => <GridDot key={i} />)}</AppGrid>
      </Dock>
    </Screen>
  );
}
